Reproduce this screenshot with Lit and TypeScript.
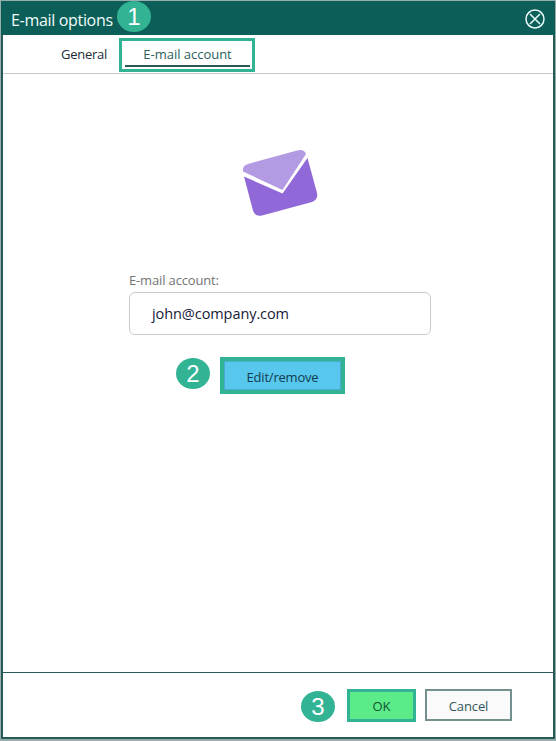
import { LitElement, html, css } from "lit";
import { customElement } from "lit/decorators.js";

@customElement("app-root")
export class AppRoot extends LitElement {
  static styles = css`
    :host {
      display: block;
      box-sizing: border-box;
      width: 556px;
      height: 741px;
      padding: 1px 1px 2px;
      background: #98aeac;
      font-family: "Open Sans", "Noto Sans", sans-serif;
      font-size: 13px;
      color: #222a35;
      white-space: nowrap;
    }
    * { box-sizing: border-box; }
    button { font: inherit; margin: 0; padding: 0; border-radius: 0; }
    .dialog {
      height: 738px;
      display: flex;
      flex-direction: column;
      border: 2px solid #275a58;
      border-top: 0;
      background: #fff;
    }
    .header {
      height: 34px;
      flex: none;
      margin: 0 -2px;
      padding: 0 10px;
      display: flex;
      align-items: center;
      background: #0c5f58;
      color: #f0fbfa;
    }
    .title { width: 106px; font-size: 16px; line-height: 22px; padding-top: 4px; letter-spacing: -0.32px; }
    .badge {
      width: 34px;
      height: 31px;
      flex: none;
      border-radius: 50%;
      background: #32b494;
      color: #fff;
      font: 24px/32px "Liberation Sans", sans-serif;
      text-align: center;
    }
    .header .badge { margin-top: -3px; }
    .close { display: block; margin-left: auto; margin-top: 2px; }
    .tabs {
      height: 39px;
      flex: none;
      padding: 3px 0 0 58px;
      display: flex;
      border-bottom: 1px solid #c8c8c8;
    }
    .tab { width: 58px; line-height: 18px; padding-top: 7px; }
    .tab span { letter-spacing: -0.28px; }
    .active {
      width: 136px;
      height: 34px;
      padding: 4px 2px 0 3px;
      border: 3px solid #32b494;
      color: #2b5f5c;
    }
    .active .label {
      height: 22px;
      border-bottom: 2px solid #275a58;
      text-align: center;
      line-height: 18px;
    }
    .active .label span { letter-spacing: -0.02px; }
    .content { flex: 1; padding: 75px 0 0 126px; }
    .mail { display: block; margin-left: 112px; }
    .caption { margin-top: 54px; line-height: 18px; color: #737373; letter-spacing: -0.15px; }
    .field {
      width: 302px;
      height: 43px;
      margin-top: 3px;
      padding-left: 22px;
      border: 1px solid #cbcbcb;
      border-radius: 6px;
      font-size: 14.5px;
      letter-spacing: -0.08px;
      line-height: 41px;
      color: #171a38;
    }
    .action { display: flex; align-items: center; margin: 22px 0 0 47px; gap: 10px; }
    .edit {
      width: 125px;
      height: 37px;
      border: 4px solid #32b494;
      background: #58c7ed;
      box-shadow: inset 0 0 0 1px #4aabd0;
      color: #123c50;
      padding-top: 3px;
      letter-spacing: -0.2px;
    }
    .action .badge { margin-top: -5px; }
    .footer {
      height: 65px;
      flex: none;
      padding: 16px 41px 0 0;
      display: flex;
      justify-content: flex-end;
      border-top: 1px solid #275a58;
    }
    .footer .badge { margin: 2px 12px 0 0; }
    .ok {
      width: 69px;
      height: 33px;
      border: 3px solid #32b494;
      background: #5ceb89;
      color: #125432;
      margin-right: 9px;
      padding-top: 1px;
    }
    .cancel {
      width: 87px;
      height: 32px;
      border: 2px solid #75918f;
      background: #fafafa;
      color: #31575a;
      padding-top: 2px;
      letter-spacing: -0.1px;
    }
  `;

  render() {
    return html`
      <div class="dialog">
        <div class="header">
          <span class="title">E-mail options</span>
          <span class="badge">1</span>
          <svg class="close" width="20" height="20" viewBox="0 0 20 20" fill="none" stroke="#e9fbfa" stroke-width="1.5">
            <circle cx="10" cy="10" r="9" />
            <path d="M5 5L15 15M15 5L5 15" />
          </svg>
        </div>
        <div class="tabs">
          <div class="tab"><span>General</span></div>
          <div class="tab active"><div class="label"><span>E-mail account</span></div></div>
        </div>
        <div class="content">
          <svg class="mail" width="78" height="68" viewBox="0 0 78 68">
            <path fill="#b39be3" d="M2 22.500Q1 17 7 15L56 1.500Q63-.5 65 5L41.500 41Z" />
            <path fill="#9068d7" d="M3 27.500L41.500 44.500L66.500 9L76 44Q77.500 50 71 53L21 66.500Q14 68 12 61.500Z" />
          </svg>
          <div class="caption">E-mail account:</div>
          <div class="field"><span>john@company.com</span></div>
          <div class="action">
            <span class="badge">2</span>
            <button class="edit"><span>Edit/remove</span></button>
          </div>
        </div>
        <div class="footer">
          <span class="badge">3</span>
          <button class="ok"><span>OK</span></button>
          <button class="cancel"><span>Cancel</span></button>
        </div>
      </div>
    `;
  }
}
